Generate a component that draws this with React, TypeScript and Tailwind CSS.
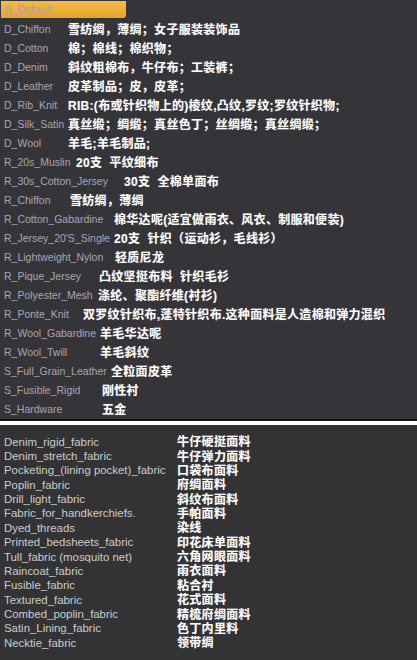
import React from "react";

const top: { l: string; c: string; w: string }[] = [
  { l: "D_Chiffon", c: "雪纺绸，薄绸；女子服装装饰品", w: "w-[64px]" },
  { l: "D_Cotton", c: "棉；棉线；棉织物；", w: "w-[64px]" },
  { l: "D_Denim", c: "斜纹粗棉布，牛仔布；工装裤；", w: "w-[64px]" },
  { l: "D_Leather", c: "皮革制品；皮，皮革；", w: "w-[64px]" },
  { l: "D_Rib_Knit", c: "RIB:(布或针织物上的)棱纹,凸纹,罗纹;罗纹针织物;", w: "w-[64px]" },
  { l: "D_Silk_Satin", c: "真丝缎；绸缎；真丝色丁；丝绸缎；真丝绸缎；", w: "w-[64px]" },
  { l: "D_Wool", c: "羊毛;羊毛制品;", w: "w-[64px]" },
  { l: "R_20s_Muslin", c: "20支  平纹细布", w: "w-[72px]" },
  { l: "R_30s_Cotton_Jersey", c: "30支  全棉单面布", w: "w-[120px]" },
  { l: "R_Chiffon", c: "雪纺绸，薄绸", w: "w-[66px]" },
  { l: "R_Cotton_Gabardine", c: "棉华达呢(适宜做雨衣、风衣、制服和便装)", w: "w-[110px]" },
  { l: "R_Jersey_20'S_Single", c: "20支  针织（运动衫，毛线衫）", w: "w-[110px]" },
  { l: "R_Lightweight_Nylon", c: "轻质尼龙", w: "w-[111px]" },
  { l: "R_Pique_Jersey", c: "凸纹坚挺布料  针织毛衫", w: "w-[95px]" },
  { l: "R_Polyester_Mesh", c: "涤纶、聚酯纤维(衬衫)", w: "w-[94px]" },
  { l: "R_Ponte_Knit", c: "双罗纹针织布,蓬特针织布.这种面料是人造棉和弹力混织", w: "w-[79px]" },
  { l: "R_Wool_Gabardine", c: "羊毛华达呢", w: "w-[96px]" },
  { l: "R_Wool_Twill", c: "羊毛斜纹", w: "w-[96px]" },
  { l: "S_Full_Grain_Leather", c: "全粒面皮革", w: "w-[107px]" },
  { l: "S_Fusible_Rigid", c: "刚性衬", w: "w-[98px]" },
  { l: "S_Hardware", c: "五金", w: "w-[98px]" },
];

const bottom: [string, string][] = [
  ["Denim_rigid_fabric", "牛仔硬挺面料"],
  ["Denim_stretch_fabric", "牛仔弹力面料"],
  ["Pocketing_(lining pocket)_fabric", "口袋布面料"],
  ["Poplin_fabric", "府绸面料"],
  ["Drill_light_fabric", "斜纹布面料"],
  ["Fabric_for_handkerchiefs.", "手帕面料"],
  ["Dyed_threads", "染线"],
  ["Printed_bedsheets_fabric", "印花床单面料"],
  ["Tull_fabric (mosquito net)", "六角网眼面料"],
  ["Raincoat_fabric", "雨衣面料"],
  ["Fusible_fabric", "粘合衬"],
  ["Textured_fabric", "花式面料"],
  ["Combed_poplin_fabric", "精梳府绸面料"],
  ["Satin_Lining_fabric", "色丁内里料"],
  ["Necktie_fabric", "领带绸"],
];

const latin = "font-['Liberation_Sans',Arial,sans-serif]";
const cjk = "font-['Liberation_Sans','Noto_Sans_CJK_SC',sans-serif] font-bold text-white text-[12px] tracking-[0.3px] whitespace-pre [text-shadow:0_0_1px_rgba(255,255,255,0.35)]";

export default function App() {
  return (
    <div className="w-[417px] h-[660px] overflow-hidden bg-[#343337] flex flex-col">
      <div className="h-[419px] bg-[#353438] flex flex-col overflow-hidden">
        <div className="h-[20px] pt-[1px] pl-[1px]">
          <div className={`h-[17px] w-[125px] rounded-br-[3px] bg-gradient-to-b from-[#f3bb45] to-[#e5a42a] pl-[4px] text-[11px] leading-[17px] text-[#a99cc6] ${latin}`}>
            0_Default
          </div>
        </div>
        {top.map((r) => (
          <div key={r.l} className="h-[19px] flex items-center pl-[4px] whitespace-nowrap">
            <span className={`${r.w} shrink-0 text-[10.5px] text-[#aaa6b7] ${latin}`}>{r.l}</span>
            <span className={cjk}>{r.c}</span>
          </div>
        ))}
      </div>
      <div className="h-[2px] bg-[#151515]" />
      <div className="h-[4px] bg-white" />
      <div className="flex-1 bg-[#333335] pt-[10px]">
        {bottom.map(([a, b]) => (
          <div key={a} className="h-[14.36px] flex items-center pl-[4px] whitespace-nowrap">
            <span className={`w-[173px] shrink-0 text-[11.4px] text-[#cdcdcd] ${latin}`}>{a}</span>
            <span className={cjk}>{b}</span>
          </div>
        ))}
      </div>
    </div>
  );
}
